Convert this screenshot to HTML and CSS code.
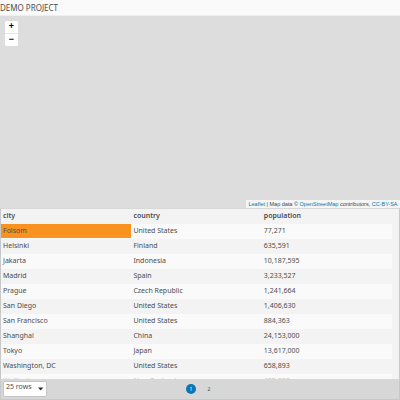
FILE: index.html
```html
<!DOCTYPE html>
<html lang="en">
<head>
<meta charset="utf-8">
<title>Demo Project</title>
<link rel="stylesheet" href="styles.css">
</head>
<body>
<header class="title">DEMO PROJECT</header>
<section class="map">
  <div class="zoom"><button>+</button><button>−</button></div>
  <div class="attribution"><a>Leaflet</a> | Map data © <a>OpenStreetMap</a> contributors, <a>CC-BY-SA</a></div>
</section>
<section class="panel">
  <div class="table">
    <div class="row head"><span>city</span><span>country</span><span>population</span></div>
    <div class="row"><span class="selected">Folsom</span><span>United States</span><span>77,271</span></div>
    <div class="row"><span>Helsinki</span><span>Finland</span><span>635,591</span></div>
    <div class="row"><span>Jakarta</span><span>Indonesia</span><span>10,187,595</span></div>
    <div class="row"><span>Madrid</span><span>Spain</span><span>3,233,527</span></div>
    <div class="row"><span>Prague</span><span>Czech Republic</span><span>1,241,664</span></div>
    <div class="row"><span>San Diego</span><span>United States</span><span>1,406,630</span></div>
    <div class="row"><span>San Francisco</span><span>United States</span><span>884,363</span></div>
    <div class="row"><span>Shanghai</span><span>China</span><span>24,153,000</span></div>
    <div class="row"><span>Tokyo</span><span>Japan</span><span>13,617,000</span></div>
    <div class="row"><span>Washington, DC</span><span>United States</span><span>658,893</span></div>
    <div class="row faded"><span>Wellington</span><span>New Zealand</span><span>405,000</span></div>
  </div>
  <footer class="footer">
    <div class="select"><span>25 rows</span><svg width="6" height="4" viewBox="0 0 6 4"><path d="M0 .5h5.4L2.7 3.5z" fill="#333"/></svg></div>
    <nav class="pages"><span class="page current">1</span><span class="page">2</span></nav>
  </footer>
</section>
</body>
</html>
```
FILE: styles.css
```css
* { box-sizing: border-box; }
body {
  margin: 0;
  width: 400px;
  height: 400px;
  overflow: hidden;
  display: flex;
  flex-direction: column;
  background: #f3f3f3;
  color: #4d4d4d;
  font: 7px/15px "Noto Sans", sans-serif;
}
.title { height: 16px; background: #fafafa; font-size: 8px; line-height: 15px; border-bottom: 1px solid #eee; white-space: nowrap; }
.map { position: relative; height: 192px; background: #ddd; }
.zoom {
  position: absolute; left: 5px; top: 5px;
  width: 13px; height: 25px;
  display: flex; flex-direction: column;
  border-radius: 2px; overflow: hidden; background: #fff;
}
.zoom button {
  height: 12px; padding: 0 0 2px; border: 0; background: #fff; color: #000;
  font: bold 9px/10px "Liberation Sans", sans-serif;
}
.zoom button + button { height: 13px; border-top: 1px solid #e6e6e6; }
.attribution {
  position: absolute; right: 0; bottom: 0;
  width: 154px; height: 8px; padding-left: 2.5px;
  background: #f5f5f5; color: #444; white-space: nowrap;
  font: 5.5px/8px "Liberation Sans", sans-serif;
}
.attribution a { color: #0078a8; }
.panel {
  height: 192px; display: flex; flex-direction: column;
  border: 1px solid #c8c8c8; border-top-color: #d8d8d8;
}
.table { height: 170px; overflow: hidden; }
.row {
  display: grid; grid-template-columns: 130.4px 130.4px 1fr;
  width: 391px; height: 15px; line-height: 13px;
}
.row span { height: 14px; padding-left: 2px; white-space: nowrap; }
.row:nth-child(even) { background: #fafafa; }
.head { font-weight: 600; line-height: 14px; }
.selected { background: #f9921f; }
.faded { color: #c2c2c2; }
.footer { flex: 1; display: flex; background: #d7d7d7; }
.select {
  width: 44px; height: 16px; margin: 2px 0 0 2px; padding: 0 3px 0 2px;
  display: flex; justify-content: space-between;
  border: 1px solid #c5c5c5; border-radius: 2px; background: #fff; line-height: 9px;
}
.select svg { margin: 5px -1px 0 0; }
.pages { display: flex; gap: 8px; margin: 5px 0 0 139px; }
.page { width: 10px; height: 10px; border-radius: 50%; text-align: center; font-size: 5px; line-height: 10px; }
.current { background: #0878b5; color: #fff; }
```
